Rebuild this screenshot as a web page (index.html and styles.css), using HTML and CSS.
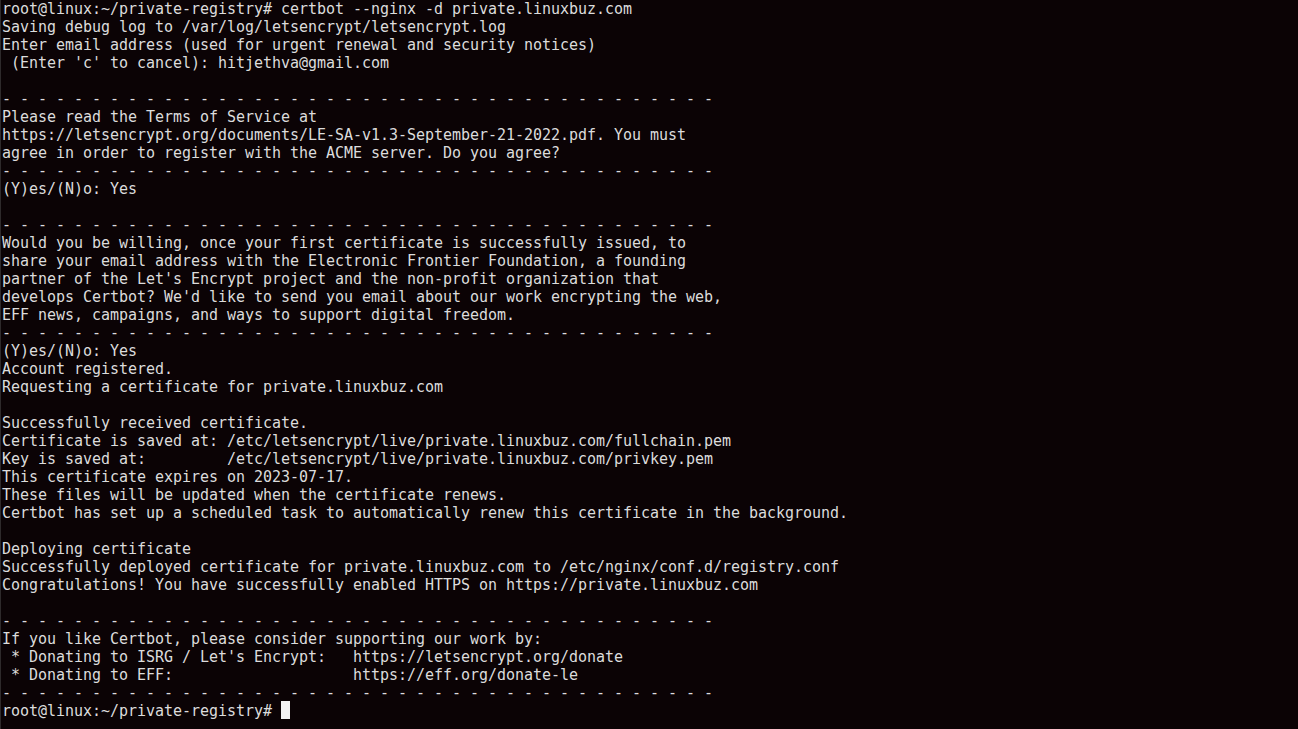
FILE: index.html
```html
<!DOCTYPE html>
<html lang="en">
<head>
<meta charset="utf-8">
<title>Terminal</title>
<link rel="stylesheet" href="styles.css">
</head>
<body>
<div class="terminal">
<pre class="output">root@linux:~/private-registry# certbot --nginx -d private.linuxbuz.com
Saving debug log to /var/log/letsencrypt/letsencrypt.log
Enter email address (used for urgent renewal and security notices)
 (Enter 'c' to cancel): hitjethva@gmail.com

- - - - - - - - - - - - - - - - - - - - - - - - - - - - - - - - - - - - - - - -
Please read the Terms of Service at
https://letsencrypt.org/documents/LE-SA-v1.3-September-21-2022.pdf. You must
agree in order to register with the ACME server. Do you agree?
- - - - - - - - - - - - - - - - - - - - - - - - - - - - - - - - - - - - - - - -
(Y)es/(N)o: Yes

- - - - - - - - - - - - - - - - - - - - - - - - - - - - - - - - - - - - - - - -
Would you be willing, once your first certificate is successfully issued, to
share your email address with the Electronic Frontier Foundation, a founding
partner of the Let's Encrypt project and the non-profit organization that
develops Certbot? We'd like to send you email about our work encrypting the web,
EFF news, campaigns, and ways to support digital freedom.
- - - - - - - - - - - - - - - - - - - - - - - - - - - - - - - - - - - - - - - -
(Y)es/(N)o: Yes
Account registered.
Requesting a certificate for private.linuxbuz.com

Successfully received certificate.
Certificate is saved at: /etc/letsencrypt/live/private.linuxbuz.com/fullchain.pem
Key is saved at:         /etc/letsencrypt/live/private.linuxbuz.com/privkey.pem
This certificate expires on 2023-07-17.
These files will be updated when the certificate renews.
Certbot has set up a scheduled task to automatically renew this certificate in the background.

Deploying certificate
Successfully deployed certificate for private.linuxbuz.com to /etc/nginx/conf.d/registry.conf
Congratulations! You have successfully enabled HTTPS on https://private.linuxbuz.com

- - - - - - - - - - - - - - - - - - - - - - - - - - - - - - - - - - - - - - - -
If you like Certbot, please consider supporting our work by:
 * Donating to ISRG / Let's Encrypt:   https://letsencrypt.org/donate
 * Donating to EFF:                    https://eff.org/donate-le
- - - - - - - - - - - - - - - - - - - - - - - - - - - - - - - - - - - - - - - -
root@linux:~/private-registry# <span class="cursor"></span></pre>
</div>
</body>
</html>
```
FILE: styles.css
```css
html, body {
  margin: 0;
  padding: 0;
  background: #0b0305;
  height: 100%;
  overflow: hidden;
}

.terminal {
  height: 100%;
  box-sizing: border-box;
  border-left: 1px solid #2e2a2b;
  padding-left: 1px;
}

.output {
  margin: 0;
  font-family: "DejaVu Sans Mono", monospace;
  font-size: 15px;
  letter-spacing: -0.031px;
  line-height: 18px;
  color: #dcdcdc;
  white-space: pre;
}

.cursor {
  display: inline-block;
  width: 9px;
  height: 18px;
  margin-top: -1px;
  vertical-align: top;
  background: #f2f2f2;
}
```
